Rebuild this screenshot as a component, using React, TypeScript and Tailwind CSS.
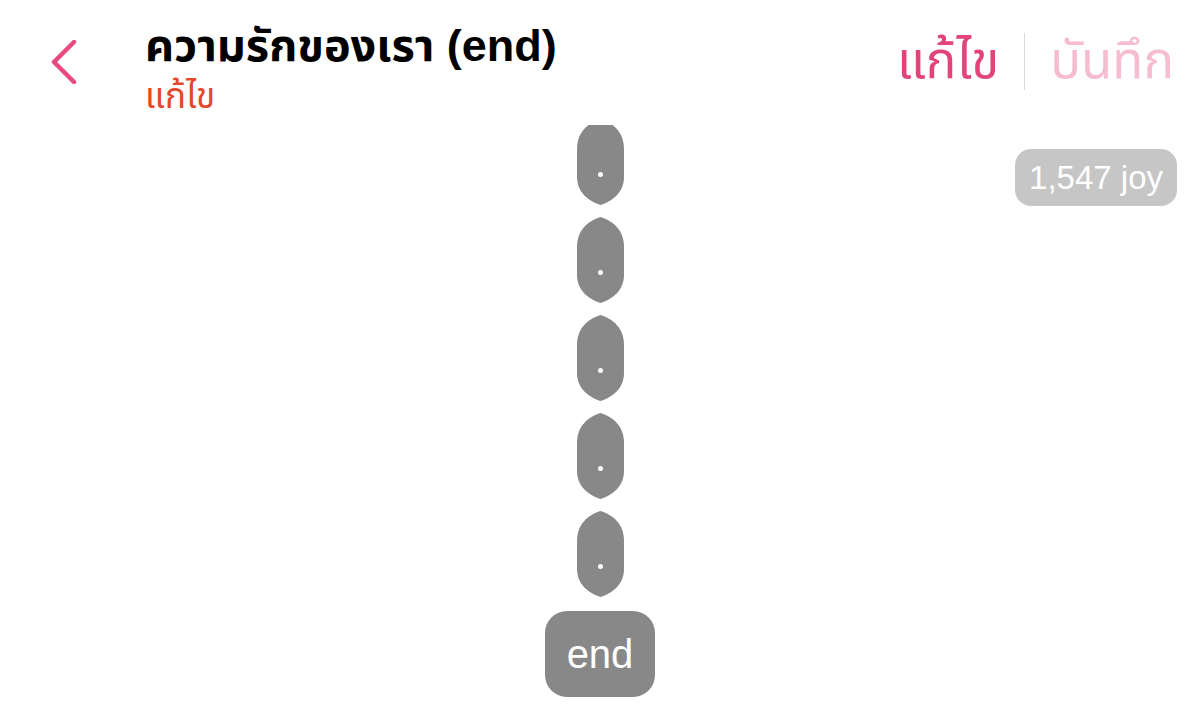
import React from "react";

const FONT = { fontFamily: '"Liberation Sans", "Noto Sans Thai", "Noto Sans", Roboto, sans-serif' };

function DotBubble() {
  return (
    <div className="relative w-[47px] h-[86px] shrink-0">
      <svg className="absolute inset-0" width="47" height="86" viewBox="0 0 47 86">
        <path
          d="M23.5 0 C36 4, 47 13, 47 30 L47 58 C47 73, 36 82, 23.5 86 C11 82, 0 73, 0 58 L0 30 C0 13, 11 4, 23.5 0 Z"
          fill="#888888"
        />
      </svg>
      <div className="absolute left-[21px] top-[53px] w-[5px] h-[5px] rounded-full bg-white" />
    </div>
  );
}

export default function App() {
  return (
    <div className="w-[1200px] h-[708px] bg-white overflow-hidden flex flex-col" style={FONT}>
      {/* Header */}
      <div className="h-[125px] shrink-0 flex items-start relative z-10 bg-white">
        <div className="w-[145px] pt-[40px] pl-[50px]">
          <svg width="28" height="44" viewBox="0 0 28 44">
            <path d="M24 2 L4 22 L24 42" fill="none" stroke="#e84a80" strokeWidth="4.5" strokeLinecap="round" strokeLinejoin="round" />
          </svg>
        </div>
        <div className="flex-1 flex flex-col pt-[18px]">
          <div className="text-[45px] leading-[56px] font-bold text-black whitespace-nowrap">
            ความรักของเรา (end)
          </div>
          <div className="text-[35px] leading-[42px] text-[#e4482c] mt-[1px]">แก้ไข</div>
        </div>
        <div className="flex items-center pt-[30px] pr-[26px]">
          <span className="text-[51px] leading-[62px] text-[#e2437a]">แก้ไข</span>
          <div className="w-px h-[57px] bg-[#d9d9d9] mx-[25px]" />
          <span className="text-[51px] leading-[62px] text-[#f6bdd2]">บันทึก</span>
        </div>
      </div>

      {/* Content */}
      <div className="flex-1 relative overflow-hidden">
        <div className="flex flex-col items-center gap-[12px] -mt-[6px]">
          <DotBubble />
          <DotBubble />
          <DotBubble />
          <DotBubble />
          <DotBubble />
          <div className="w-[110px] h-[86px] rounded-[22px] bg-[#888888] flex items-center justify-center text-white text-[40px] mt-[2px]">
            end
          </div>
        </div>
        <div className="absolute right-[23px] top-[24px] h-[57px] px-[14px] rounded-[16px] bg-[#c6c6c6] flex items-center text-white text-[33px]">
          1,547 joy
        </div>
      </div>
    </div>
  );
}
